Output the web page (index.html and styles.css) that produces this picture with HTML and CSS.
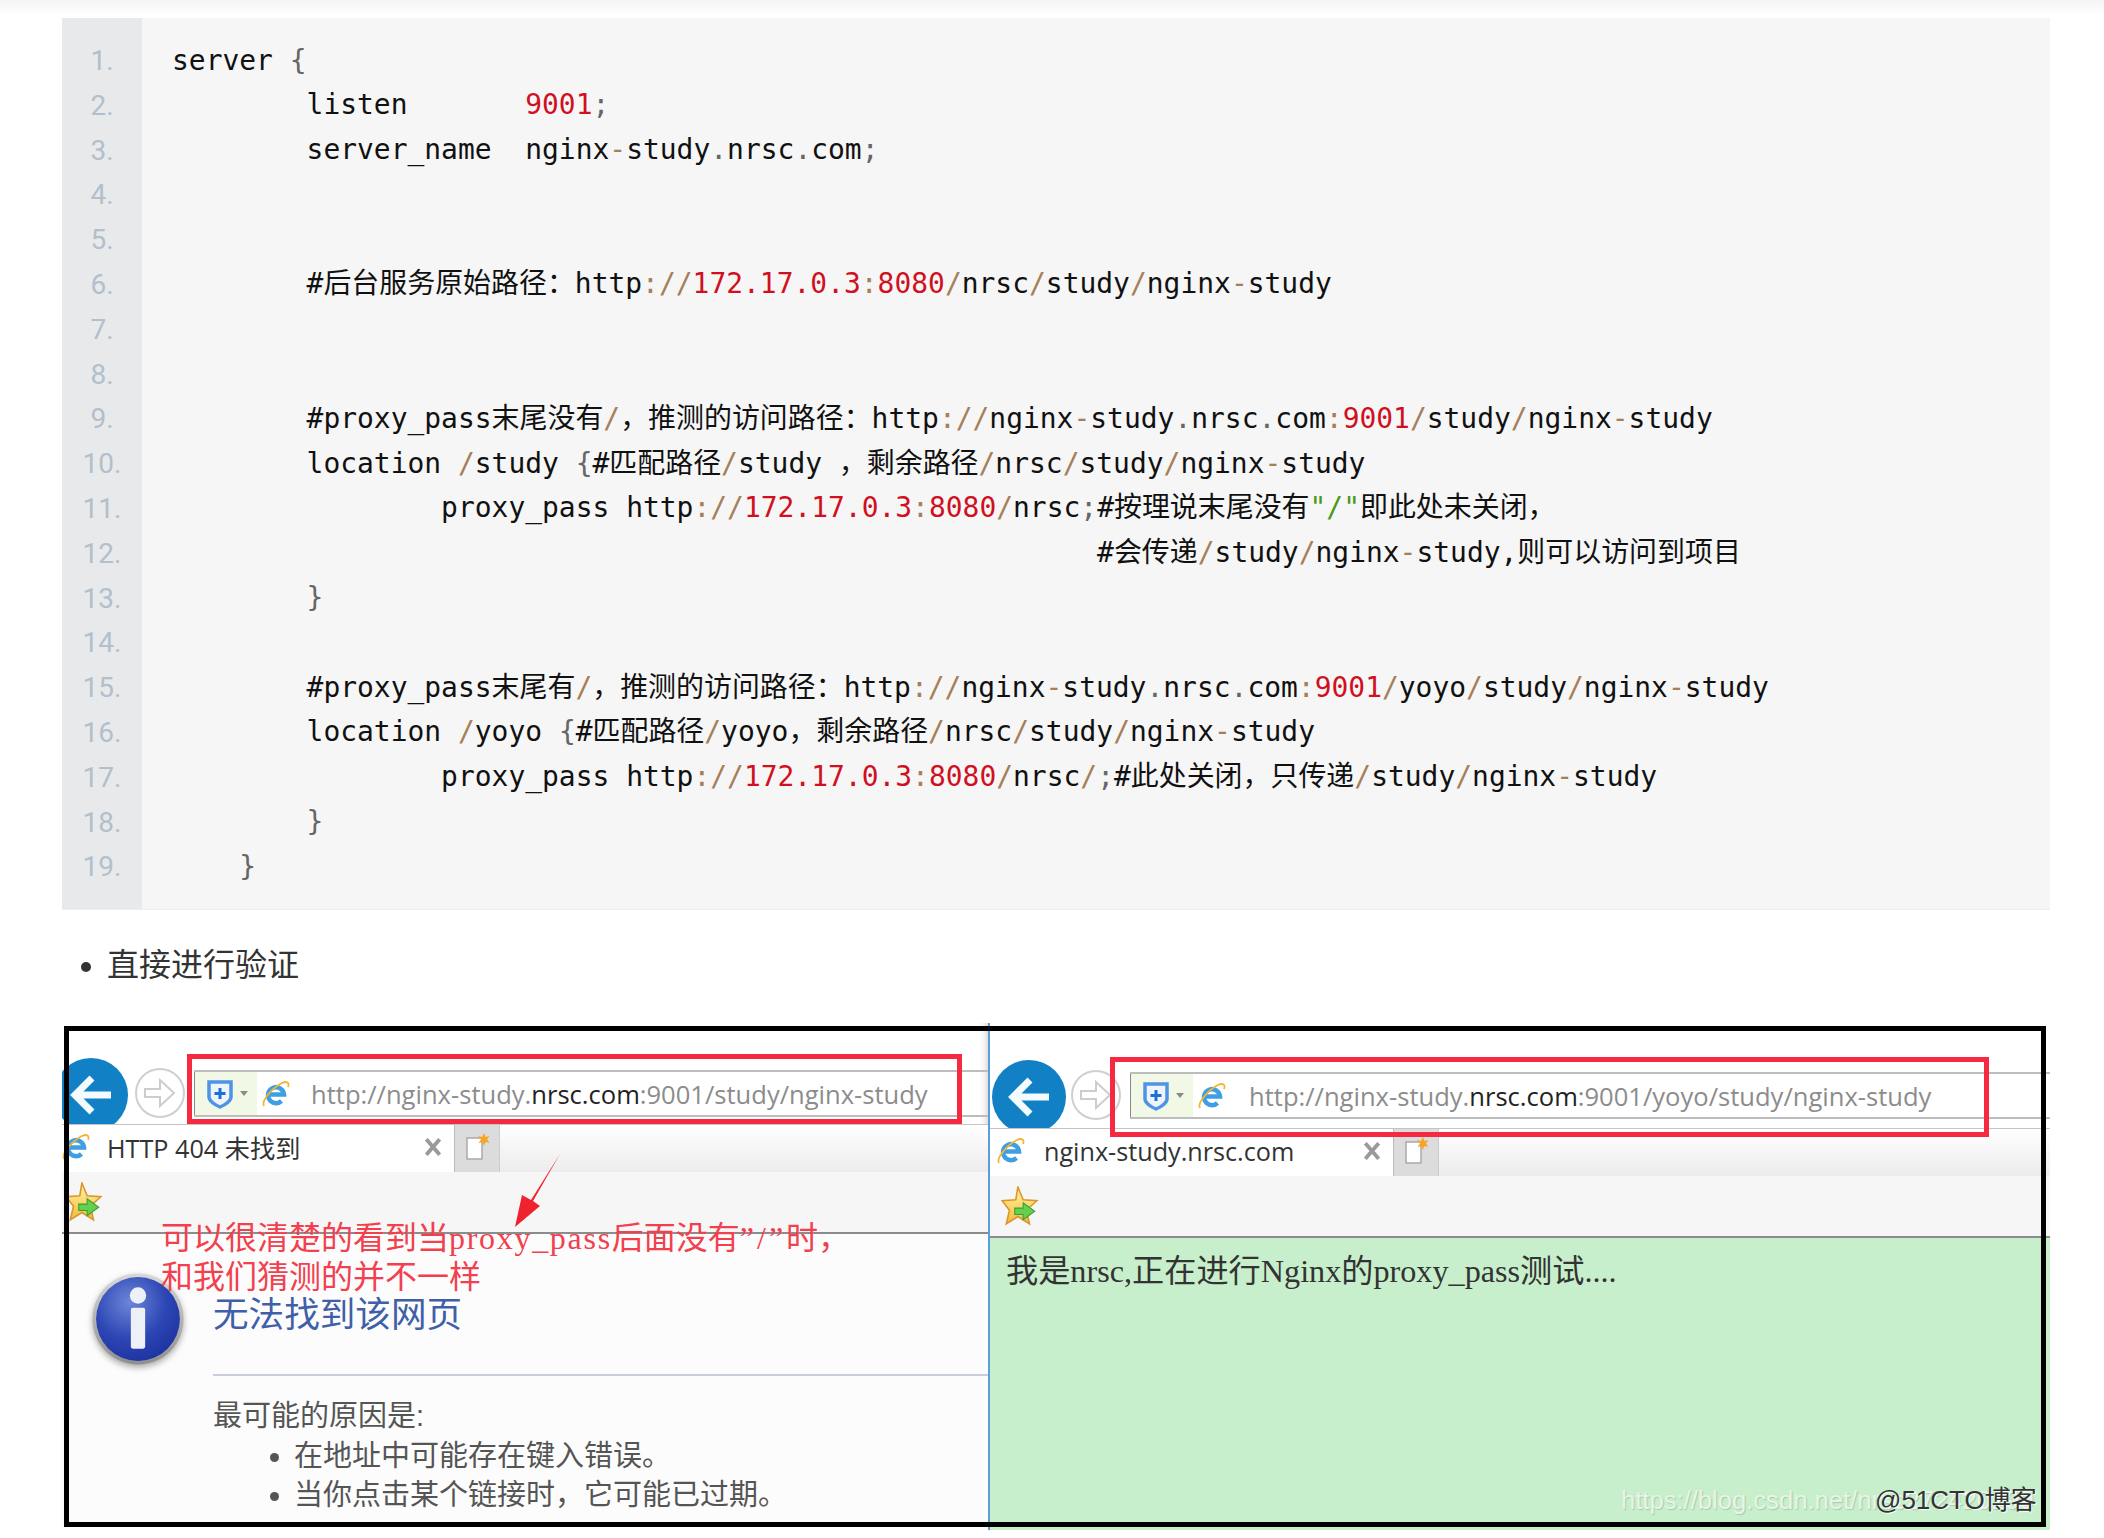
FILE: index.html
```html
<!DOCTYPE html>
<html lang="zh-CN">
<head>
<meta charset="utf-8">
<title>nginx proxy_pass</title>
<link rel="stylesheet" href="styles.css">
</head>
<body>
<svg class="sprite" aria-hidden="true">
  <defs>
    <linearGradient id="starFill" x1="0" y1="0" x2="0" y2="1"><stop offset="0" stop-color="#fff6a8"/><stop offset="1" stop-color="#f7b93a"/></linearGradient>
    <radialGradient id="infoFill" cx="0.4" cy="0.3" r="0.8"><stop offset="0" stop-color="#6d86d8"/><stop offset="0.55" stop-color="#2c46b4"/><stop offset="1" stop-color="#1a2f9c"/></radialGradient>
    <linearGradient id="infoRim" x1="0" y1="0" x2="0" y2="1"><stop offset="0" stop-color="#d8d8d8"/><stop offset="1" stop-color="#8f8f8f"/></linearGradient>
    <symbol id="ie" viewBox="0 0 28 28">
      <path d="M7 14.500h15a8 8 0 1 0-2.500 6.500" fill="none" stroke="#3f9fe2" stroke-width="4.500"/>
      <path d="M2 26C-1 21 10 8 20 3c4-2 8-1 6 4" fill="none" stroke="#f2b632" stroke-width="1.800"/>
    </symbol>
    <symbol id="shield" viewBox="0 0 30 30">
      <path d="M4 3h22v15c0 4-6 8-11 10-5-2-11-6-11-10z" fill="#eef4fb" stroke="#4f94e4" stroke-width="3.500"/>
      <path d="M15 9v11M9.500 14.500h11" stroke="#1c6fd4" stroke-width="3"/>
    </symbol>
    <symbol id="star" viewBox="0 0 36 38">
      <path d="M16 1l5 12 13 1-10 9 3 13-11-7-11 7 3-13L1 14l13-1z" fill="url(#starFill)" stroke="#d9962a" stroke-width="1.500"/>
      <path d="M13 21h8v-5l11 8-11 8v-5h-8z" fill="#63d14f" stroke="#3c9e30"/>
    </symbol>
    <symbol id="page" viewBox="0 0 26 30">
      <path d="M3 6h15v21H3z" fill="#fff" stroke="#a9a9a9" stroke-width="1.500"/>
      <path d="M20 1l1.500 4 4-1-2.500 3.500 2.500 3.500-4-1L20 14l-1.500-4-4 1 2.500-3.500L14 4l4 1z" fill="#f6a623"/>
    </symbol>
    <symbol id="close" viewBox="0 0 18 18">
      <path d="M3 2l12 14M15 2L3 16" stroke="#9a9a9a" stroke-width="3.500"/>
    </symbol>
    <symbol id="back" viewBox="0 0 74 74">
      <circle cx="37" cy="37" r="37" fill="#1180c4"/>
      <path d="M57 37H23M38 20L21 37l17 17" fill="none" stroke="#f4fbff" stroke-width="7"/>
    </symbol>
    <symbol id="forward" viewBox="0 0 50 50">
      <circle cx="25" cy="25" r="24" fill="#fff" stroke="#cfcfcf" stroke-width="2"/>
      <path d="M10 21h15v-9l14 13-14 13v-9H10z" fill="#fff" stroke="#cdcdcd" stroke-width="2"/>
    </symbol>
  </defs>
</svg>

<main class="page">
<section class="code">
<ol class="gutter"><li>1.</li><li>2.</li><li>3.</li><li>4.</li><li>5.</li><li>6.</li><li>7.</li><li>8.</li><li>9.</li><li>10.</li><li>11.</li><li>12.</li><li>13.</li><li>14.</li><li>15.</li><li>16.</li><li>17.</li><li>18.</li><li>19.</li></ol>
<pre class="source"><code>server <i class="p">{</i>
        listen       <i class="n">9001</i><i class="p">;</i>
        server_name  nginx<i class="o">-</i>study<i class="p">.</i>nrsc<i class="p">.</i>com<i class="p">;</i>


        #后台服务原始路径：http<i class="o">://</i><i class="n">172.17.0.3</i><i class="o">:</i><i class="n">8080</i><i class="o">/</i>nrsc<i class="o">/</i>study<i class="o">/</i>nginx<i class="o">-</i>study


        #proxy_pass末尾没有<i class="o">/</i>，推测的访问路径：http<i class="o">://</i>nginx<i class="o">-</i>study<i class="p">.</i>nrsc<i class="p">.</i>com<i class="o">:</i><i class="n">9001</i><i class="o">/</i>study<i class="o">/</i>nginx<i class="o">-</i>study
        location <i class="o">/</i>study <i class="p">{</i>#匹配路径<i class="o">/</i>study ，剩余路径<i class="o">/</i>nrsc<i class="o">/</i>study<i class="o">/</i>nginx<i class="o">-</i>study
                proxy_pass http<i class="o">://</i><i class="n">172.17.0.3</i><i class="o">:</i><i class="n">8080</i><i class="o">/</i>nrsc<i class="p">;</i>#按理说末尾没有<i class="s">"/"</i>即此处未关闭，
                                                       #会传递<i class="o">/</i>study<i class="o">/</i>nginx<i class="o">-</i>study,则可以访问到项目
        <i class="p">}</i>

        #proxy_pass末尾有<i class="o">/</i>，推测的访问路径：http<i class="o">://</i>nginx<i class="o">-</i>study<i class="p">.</i>nrsc<i class="p">.</i>com<i class="o">:</i><i class="n">9001</i><i class="o">/</i>yoyo<i class="o">/</i>study<i class="o">/</i>nginx<i class="o">-</i>study
        location <i class="o">/</i>yoyo <i class="p">{</i>#匹配路径<i class="o">/</i>yoyo，剩余路径<i class="o">/</i>nrsc<i class="o">/</i>study<i class="o">/</i>nginx<i class="o">-</i>study
                proxy_pass http<i class="o">://</i><i class="n">172.17.0.3</i><i class="o">:</i><i class="n">8080</i><i class="o">/</i>nrsc<i class="o">/</i><i class="p">;</i>#此处关闭，只传递<i class="o">/</i>study<i class="o">/</i>nginx<i class="o">-</i>study
        <i class="p">}</i>
    <i class="p">}</i></code></pre>
</section>

<ul class="bullets"><li>直接进行验证</li></ul>

<figure class="shot">
  <div class="browser browser-left">
    <div class="toolbar">
      <svg class="ico-back"><use href="#back"/></svg>
      <svg class="ico-forward"><use href="#forward"/></svg>
      <div class="address">
        <span class="security"><svg class="ico-shield"><use href="#shield"/></svg><i class="caret"></i></span>
        <svg class="ico-ie"><use href="#ie"/></svg>
        <span class="url">http://nginx-study.<b>nrsc.com</b>:9001/study/nginx-study</span>
      </div>
    </div>
    <div class="tabs">
      <div class="tab">
        <svg class="ico-ie tab-ie"><use href="#ie"/></svg>
        <span class="tab-title">HTTP 404 未找到</span>
        <svg class="ico-close"><use href="#close"/></svg>
      </div>
      <div class="newtab"><svg class="ico-page"><use href="#page"/></svg></div>
    </div>
    <div class="favbar"><svg class="ico-star"><use href="#star"/></svg></div>
    <div class="error">
      <svg class="ico-info" viewBox="0 0 90 90">
        <circle cx="45" cy="45" r="44.500" fill="url(#infoRim)"/>
        <circle cx="45" cy="45" r="41" fill="url(#infoFill)"/>
        <circle cx="45" cy="22" r="8" fill="#eef0f8"/>
        <rect x="38" y="34" width="14" height="40" rx="2" fill="#eef0f8"/>
      </svg>
      <div class="error-body">
        <h1 class="error-title">无法找到该网页</h1>
        <hr class="error-rule">
        <p class="error-lead">最可能的原因是:</p>
        <ul class="error-list">
          <li>在地址中可能存在键入错误。</li>
          <li>当你点击某个链接时，它可能已过期。</li>
        </ul>
      </div>
    </div>
  </div>
  <div class="browser browser-right">
    <div class="toolbar">
      <svg class="ico-back"><use href="#back"/></svg>
      <svg class="ico-forward"><use href="#forward"/></svg>
      <div class="address">
        <span class="security"><svg class="ico-shield"><use href="#shield"/></svg><i class="caret"></i></span>
        <svg class="ico-ie"><use href="#ie"/></svg>
        <span class="url">http://nginx-study.<b>nrsc.com</b>:9001/yoyo/study/nginx-study</span>
      </div>
    </div>
    <div class="tabs">
      <div class="tab">
        <svg class="ico-ie tab-ie"><use href="#ie"/></svg>
        <span class="tab-title">nginx-study.nrsc.com</span>
        <svg class="ico-close"><use href="#close"/></svg>
      </div>
      <div class="newtab"><svg class="ico-page"><use href="#page"/></svg></div>
    </div>
    <div class="favbar"><svg class="ico-star"><use href="#star"/></svg></div>
    <div class="result">我是nrsc,正在进行Nginx的proxy_pass测试....</div>
  </div>

  <div class="frame"></div>
  <div class="mark mark-left"></div>
  <div class="mark mark-right"></div>
  <svg class="arrow" viewBox="0 0 50 76"><path d="M47 1L18 47l-9-5-7 32 25-21-7-5z" fill="#f0222f"/></svg>
  <p class="note">可以很清楚的看到当<span class="note-latin">proxy_pass</span>后面没有<span class="note-quote">”/”</span>时，<br>和我们猜测的并不一样</p>
  <p class="wm wm-csdn">https://blog.csdn.net/nrsc272420199</p>
  <p class="wm wm-cto">@51CTO博客</p>
</figure>
</main>
</body>
</html>
```

FILE: styles.css
```css
html, body {
  margin: 0;
  padding: 0;
}
body {
  background: #fff linear-gradient(#f5f5f5, #fff 16px) no-repeat;
  font-family: "Liberation Sans", "Noto Sans CJK SC", sans-serif;
  color: #333;
}
.sprite {
  position: absolute;
  width: 0;
  height: 0;
}
.page {
  padding: 18px 54px 0 62px;
}

/* code block */
.code {
  display: flex;
  height: 892px;
  background: #f6f6f6;
  border-bottom: 1px solid #eee;
  box-sizing: border-box;
}
.gutter {
  list-style: none;
  margin: 0;
  padding: 21px 0 0;
  width: 80px;
  flex: none;
  background: #e8e9ea;
  color: #b2bfcc;
  font: 28px/44.8px "Roboto", sans-serif;
  text-align: center;
}
.source {
  margin: 0;
  padding: 20.5px 0 0 30px;
  font: 27.94px/44.8px "DejaVu Sans Mono", "Noto Sans CJK SC", monospace;
  color: #111;
  white-space: pre;
}
.source code {
  font: inherit;
}
.source i {
  font-style: normal;
}
.o { color: #a67f59; }
.n { color: #d0101f; }
.p { color: #666; }
.s { color: #4a9a1a; }

/* prose */
.bullets {
  margin: 33px 0 36px;
  padding: 0 0 0 45px;
  font-size: 32px;
  line-height: 44px;
  color: #333;
}

/* screenshot */
.shot {
  position: relative;
  display: flex;
  margin: 0;
  height: 507px;
  width: 1988px;
}
.browser {
  display: flex;
  flex-direction: column;
  overflow: hidden;
  background: #fff;
}
.browser-left {
  width: 926px;
  flex: none;
  height: 504px;
  box-shadow: inset -8px 0 8px -8px #bbb;
}
.browser-right {
  flex: 1;
  border-left: 2px solid #5a9fdc;
}
.toolbar {
  display: flex;
  align-items: flex-start;
  flex: none;
  height: 102px;
  padding-top: 35px;
  box-sizing: border-box;
  overflow: hidden;
  border-bottom: 1px solid #c4c4c4;
}
.browser-right .toolbar {
  height: 106px;
  padding-top: 37px;
}
.ico-back {
  width: 74px;
  height: 74px;
  flex: none;
  margin-left: -8px;
}
.browser-right .ico-back {
  margin-left: 2px;
}
.ico-forward {
  width: 50px;
  height: 50px;
  flex: none;
  margin: 10px 0 0 7px;
}
.browser-right .ico-forward {
  margin-left: 5px;
}
.address {
  display: flex;
  align-items: center;
  flex: 1;
  height: 47px;
  margin: 12px 0 0 9px;
  border-top: 2px solid #bdbdbd;
  border-bottom: 2px solid #bdbdbd;
  box-sizing: border-box;
}
.security {
  display: flex;
  align-items: center;
  width: 63px;
  height: 100%;
  padding-left: 10px;
  box-sizing: border-box;
  background: #f1f9e6;
  border-left: 1px solid #888;
}
.ico-shield {
  width: 30px;
  height: 30px;
}
.caret {
  width: 0;
  height: 0;
  margin-left: 5px;
  border: 4px solid transparent;
  border-top: 5px solid #8a8a8a;
  border-bottom: 0;
}
.ico-ie {
  width: 28px;
  height: 28px;
  flex: none;
  margin-left: 5px;
}
.url {
  margin-left: 21px;
  font: 25.55px "Open Sans", sans-serif;
  color: #8c8c8c;
  white-space: nowrap;
}
.url b {
  font-weight: 400;
  color: #222;
}
.browser-right .url {
  margin-left: 23px;
}
.tabs {
  display: flex;
  flex: none;
  height: 47px;
  background: linear-gradient(#fff, #ececec);
}
.tab {
  display: flex;
  align-items: center;
  width: 392px;
  padding-bottom: 3px;
  box-sizing: border-box;
  background: #fff;
}
.browser-right .tab {
  width: 403px;
}
.tab-ie {
  margin-left: 0;
}
.browser-right .tab-ie {
  margin-left: 7px;
}
.tab-title {
  flex: 1;
  margin-left: 17px;
  font: 25.2px "Open Sans", "Noto Sans CJK SC", sans-serif;
  color: #333;
  white-space: nowrap;
}
.browser-right .tab-title {
  margin-left: 19px;
}
.ico-close {
  width: 20px;
  height: 20px;
  flex: none;
  margin-right: 11px;
}
.newtab {
  display: flex;
  align-items: center;
  justify-content: center;
  width: 46px;
  padding-bottom: 3px;
  background: #dcdcdc;
  border-left: 1px solid #bbb;
  border-right: 1px solid #ccc;
  box-sizing: border-box;
}
.ico-page {
  width: 26px;
  height: 30px;
}
.favbar {
  display: flex;
  align-items: center;
  flex: none;
  height: 62px;
  padding-left: 3px;
  box-sizing: border-box;
  background: #f6f6f6;
  border-bottom: 2px solid #8c8c8c;
}
.browser-right .favbar {
  padding-left: 11px;
}
.ico-star {
  width: 38px;
  height: 40px;
}
.error {
  display: flex;
  flex: 1;
  gap: 29px;
  padding: 39px 0 0 30px;
  background: #fcfcfc;
}
.ico-info {
  width: 92px;
  height: 92px;
  flex: none;
  filter: drop-shadow(0 3px 3px #aaa);
}
.error-body {
  flex: 1;
}
.error-title {
  margin: 17px 0 34px;
  font-size: 35.6px;
  line-height: 50px;
  font-weight: 400;
  color: #3f60a8;
}
.error-rule {
  height: 2px;
  margin: 0 0 20px;
  border: 0;
  background: #c8cede;
}
.error-lead {
  margin: 0 0 1px;
  font-size: 29px;
  line-height: 40px;
  color: #555;
}
.error-list {
  margin: 0;
  padding: 0 0 0 81px;
  font-size: 29px;
  line-height: 39px;
  color: #555;
}
.result {
  flex: 1;
  padding: 13px 0 0 16px;
  background: #c7efcb;
  font: 32.2px/40px "Liberation Serif", "Noto Sans CJK SC", serif;
  color: #333;
}

/* overlays on the pasted image */
.frame {
  position: absolute;
  left: 2px;
  top: 3px;
  width: 1982px;
  height: 501px;
  box-sizing: border-box;
  border: 5px solid #000;
  pointer-events: none;
}
.mark {
  position: absolute;
  box-sizing: border-box;
  border: 5px solid #f5293f;
}
.mark-left {
  left: 125px;
  top: 31px;
  width: 775px;
  height: 70px;
}
.mark-right {
  left: 1048px;
  top: 34px;
  width: 879px;
  height: 80px;
}
.arrow {
  position: absolute;
  left: 451px;
  top: 130px;
  width: 50px;
  height: 76px;
}
.note {
  position: absolute;
  left: 99px;
  top: 196px;
  margin: 0;
  font: 32px/39px "Liberation Serif", "Noto Sans CJK SC", serif;
  color: #f2404e;
  white-space: nowrap;
}
.note-latin {
  letter-spacing: 1.7px;
}
.note-quote {
  letter-spacing: 3px;
}
.wm {
  position: absolute;
  margin: 0;
  white-space: nowrap;
  line-height: 32px;
}
.wm-csdn {
  left: 1559px;
  top: 461px;
  font-size: 25.6px;
  color: #e6f5e6;
  text-shadow: 1px 1px 1px #a9c9ac;
}
.wm-cto {
  left: 1813px;
  top: 461px;
  font-size: 26px;
  color: #333;
  text-shadow: 1px 1px 1px #fff;
}
```
